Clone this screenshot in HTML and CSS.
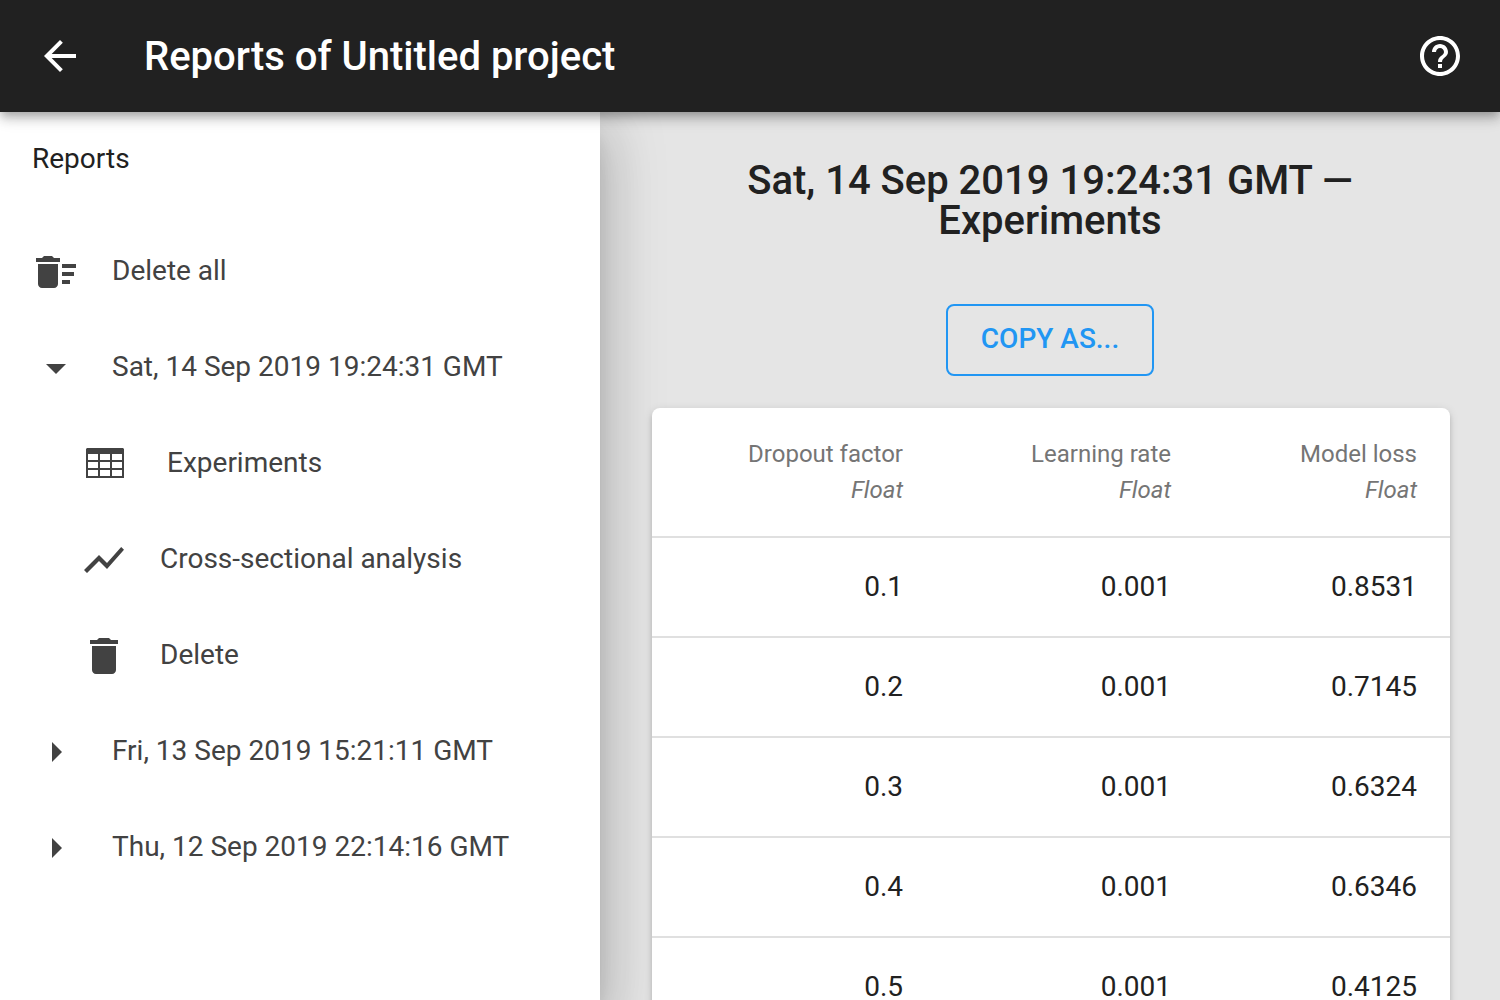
FILE: index.html
```html
<!DOCTYPE html>
<html lang="en">
<head>
<meta charset="utf-8">
<meta name="viewport" content="width=device-width, initial-scale=1">
<title>Reports of Untitled project</title>
<link rel="stylesheet" href="styles.css">
</head>
<body>
<header class="toolbar">
  <button class="icon-button" type="button" aria-label="Back">
    <svg class="icon" viewBox="0 0 24 24"><path d="M20 11H7.83l5.59-5.59L12 4l-8 8 8 8 1.41-1.41L7.83 13H20z"/></svg>
  </button>
  <h1 class="toolbar-title">Reports of Untitled project</h1>
  <button class="icon-button" type="button" aria-label="Help">
    <svg class="icon" viewBox="0 0 24 24"><path d="M11 18h2v-2h-2v2zm1-16C6.48 2 2 6.48 2 12s4.48 10 10 10 10-4.48 10-10S17.52 2 12 2zm0 18c-4.41 0-8-3.59-8-8s3.59-8 8-8 8 3.59 8 8-3.59 8-8 8zm0-14c-2.21 0-4 1.79-4 4h2c0-1.1.9-2 2-2s2 .9 2 2c0 2-3 1.75-3 5h2c0-2.25 3-2.5 3-5 0-2.21-1.79-4-4-4z"/></svg>
  </button>
</header>
<div class="layout">
  <nav class="drawer" aria-labelledby="drawer-title">
    <h2 class="drawer-title" id="drawer-title">Reports</h2>
    <ul class="nav-list">
      <li><button class="nav-item" type="button">
        <svg class="icon" viewBox="0 0 24 24"><path d="M15 16h4v2h-4zm0-8h7v2h-7zm0 4h6v2h-6zM3 18c0 1.1.9 2 2 2h6c1.1 0 2-.9 2-2V8H3zM14 5h-3l-1-1H6L5 5H2v2h12z"/></svg>
        <span class="nav-label">Delete all</span></button></li>
      <li>
        <button class="nav-item" type="button" aria-expanded="true">
          <svg class="icon" viewBox="0 0 24 24"><path d="M7 10l5 5 5-5z"/></svg>
          <span class="nav-label">Sat, 14 Sep 2019 19:24:31 GMT</span></button>
        <ul class="nav-list">
          <li><a class="nav-item nav-item-nested" href="#experiments">
            <svg class="icon icon-wide" viewBox="0 0 55 48"><path fill-rule="evenodd" d="M7 8h36l1 1v29H6V9zM8 14v6h10v-6zM20 14v6h10v-6zM32 14v6h10v-6zM8 22v6h10v-6zM20 22v6h10v-6zM32 22v6h10v-6zM8 30v6h10v-6zM20 30v6h10v-6zM32 30v6h10v-6z"/></svg>
            <span class="nav-label">Experiments</span></a></li>
          <li><a class="nav-item nav-item-nested" href="#analysis">
            <svg class="icon" viewBox="0 0 24 24"><path d="M3.5 18.49l6-6.01 4 4L22 6.92l-1.41-1.41-7.09 7.97-4-4L2 16.99z"/></svg>
            <span class="nav-label">Cross-sectional analysis</span></a></li>
          <li><button class="nav-item nav-item-nested" type="button">
            <svg class="icon" viewBox="0 0 24 24"><path d="M6 19c0 1.1.9 2 2 2h8c1.1 0 2-.9 2-2V7H6zM19 4h-3.5l-1-1h-5l-1 1H5v2h14z"/></svg>
            <span class="nav-label">Delete</span></button></li>
        </ul>
      </li>
      <li><button class="nav-item" type="button" aria-expanded="false">
        <svg class="icon" viewBox="0 0 24 24"><path d="M10 17l5-5-5-5z"/></svg>
        <span class="nav-label">Fri, 13 Sep 2019 15:21:11 GMT</span></button></li>
      <li><button class="nav-item" type="button" aria-expanded="false">
        <svg class="icon" viewBox="0 0 24 24"><path d="M10 17l5-5-5-5z"/></svg>
        <span class="nav-label">Thu, 12 Sep 2019 22:14:16 GMT</span></button></li>
    </ul>
  </nav>
  <main class="content" id="experiments">
    <h2 class="report-title">Sat, 14 Sep 2019 19:24:31 GMT — Experiments</h2>
    <button class="copy-button" type="button">COPY AS...</button>
    <div class="card">
      <table class="data-table">
        <colgroup><col class="col-dropout"><col class="col-rate"><col class="col-loss"></colgroup>
        <thead>
          <tr>
            <th scope="col">Dropout factor<br><em>Float</em></th>
            <th scope="col">Learning rate<br><em>Float</em></th>
            <th scope="col">Model loss<br><em>Float</em></th>
          </tr>
        </thead>
        <tbody>
          <tr><td>0.1</td><td>0.001</td><td>0.8531</td></tr>
          <tr><td>0.2</td><td>0.001</td><td>0.7145</td></tr>
          <tr><td>0.3</td><td>0.001</td><td>0.6324</td></tr>
          <tr><td>0.4</td><td>0.001</td><td>0.6346</td></tr>
          <tr><td>0.5</td><td>0.001</td><td>0.4125</td></tr>
        </tbody>
      </table>
    </div>
  </main>
</div>
</body>
</html>
```
FILE: styles.css
```css
* {
  box-sizing: border-box;
}

body {
  display: flex;
  flex-direction: column;
  height: 100vh;
  margin: 0;
  overflow: hidden;
  background: #e5e5e5;
  color: #212121;
  font: 400 28px/1.5 Roboto, sans-serif;
}

button {
  border: 0;
  background: none;
  color: inherit;
  font: inherit;
  cursor: pointer;
}

.icon {
  display: block;
  flex: none;
  width: 48px;
  height: 48px;
  fill: currentColor;
}

.icon-wide {
  width: 55px;
}

.toolbar {
  position: relative;
  z-index: 2;
  display: flex;
  flex: none;
  align-items: center;
  height: 112px;
  padding: 0 12px;
  background: #212121;
  color: #fff;
  box-shadow: 0 4px 8px -2px rgba(0, 0, 0, 0.2), 0 8px 10px 0 rgba(0, 0, 0, 0.14), 0 2px 20px 0 rgba(0, 0, 0, 0.12);
}

.icon-button {
  padding: 24px;
}

.toolbar-title {
  flex: 1;
  margin: 0 36px;
  padding-top: 2px;
  font-size: 40px;
  font-weight: 500;
  line-height: 60px;
}

.layout {
  display: flex;
  flex: 1;
  min-height: 0;
}

.drawer {
  flex: none;
  width: 40%;
  background: #fff;
  box-shadow: 0 16px 20px -10px rgba(0, 0, 0, 0.2), 0 32px 48px 4px rgba(0, 0, 0, 0.14), 0 12px 60px 10px rgba(0, 0, 0, 0.12);
}

.drawer-title {
  margin: 0 0 18px;
  padding: 0 32px;
  font-size: 28px;
  font-weight: 400;
  line-height: 94px;
}

.nav-list {
  margin: 0;
  padding: 0;
  list-style: none;
}

.nav-item {
  display: flex;
  align-items: center;
  gap: 32px;
  width: 100%;
  height: 96px;
  padding: 0 32px;
  color: #424242;
  text-align: left;
  text-decoration: none;
}

.nav-item-nested {
  padding-left: 80px;
}

.nav-label {
  padding-bottom: 2px;
}

.content {
  position: relative;
  z-index: 1;
  flex: 1;
  min-width: 0;
  padding: 49px 50px 48px;
  overflow: hidden auto;
  scrollbar-width: none;
  text-align: center;
}

.report-title {
  margin: 0 0 63px;
  font-size: 40px;
  font-weight: 500;
  line-height: 40px;
}

.copy-button {
  display: block;
  min-width: 208px;
  height: 72px;
  margin: 0 auto 32px;
  padding: 0 32px 2px;
  border: 2px solid #2196f3;
  border-radius: 8px;
  color: #2196f3;
  font-weight: 500;
}

.card {
  margin-left: 2px;
  border-radius: 8px;
  background: #fff;
  box-shadow: 0 6px 2px -4px rgba(0, 0, 0, 0.2), 0 4px 4px 0 rgba(0, 0, 0, 0.14), 0 2px 10px 0 rgba(0, 0, 0, 0.12);
}

.data-table {
  width: 100%;
  border-collapse: separate;
  border-spacing: 0;
  table-layout: fixed;
  text-align: right;
}

.col-dropout {
  width: 284px;
}

.col-rate {
  width: 268px;
}

.col-loss {
  width: 246px;
}

.data-table th {
  height: 128px;
  padding: 0 33px;
  color: #757575;
  font-size: 24px;
  font-weight: 400;
  line-height: 36px;
  text-align: right;
}

.data-table td {
  height: 100px;
  padding: 0 33px;
  border-top: 2px solid #e0e0e0;
}
```
